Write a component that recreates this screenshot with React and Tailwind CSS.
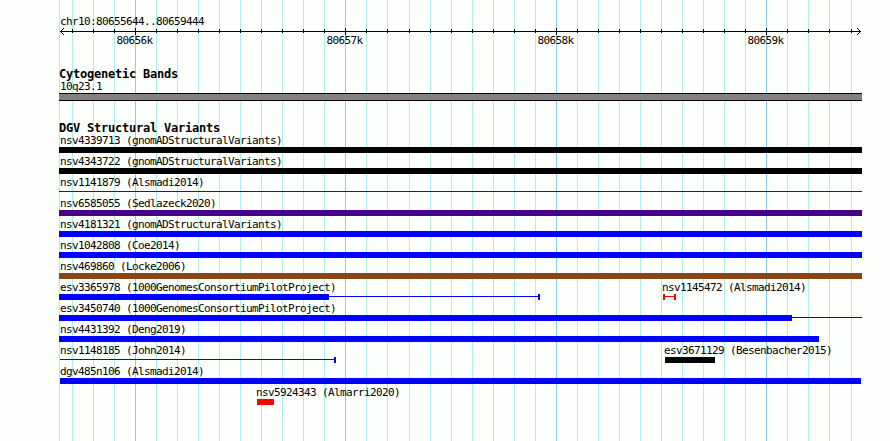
import React from 'react';

const START = 59;
const END = 862;

const minorLines = [
  59, 72, 93, 114, 156, 177, 198, 219, 240, 261, 282, 303, 324, 366, 387, 409, 430, 451, 472,
  493, 514, 535, 577, 598, 619, 640, 661, 682, 703, 724, 745, 787, 808, 829, 851,
];

const majorLines = [
  { x: 135, label: '80656k' },
  { x: 345, label: '80657k' },
  { x: 556, label: '80658k' },
  { x: 766, label: '80659k' },
];

const rows = [
  [{ name: 'nsv4339713 (gnomADStructuralVariants)', x: 59, bar: 803, color: '#000000' }],
  [{ name: 'nsv4343722 (gnomADStructuralVariants)', x: 59, bar: 803, color: '#000000' }],
  [{ name: 'nsv1141879 (Alsmadi2014)', x: 59, line: 803, color: '#4b0082' }],
  [{ name: 'nsv6585055 (Sedlazeck2020)', x: 59, bar: 803, color: '#4b0082' }],
  [{ name: 'nsv4181321 (gnomADStructuralVariants)', x: 59, bar: 803, color: '#0000ff' }],
  [{ name: 'nsv1042808 (Coe2014)', x: 59, bar: 803, color: '#0000ff' }],
  [{ name: 'nsv469860 (Locke2006)', x: 59, bar: 803, color: '#8b4513' }],
  [
    { name: 'esv3365978 (1000GenomesConsortiumPilotProject)', x: 59, bar: 270, line: 211, endCap: true, color: '#0000ff' },
    { name: 'nsv1145472 (Alsmadi2014)', x: 663, line: 13, startCap: true, endCap: true, color: '#ff0000' },
  ],
  [{ name: 'esv3450740 (1000GenomesConsortiumPilotProject)', x: 59, bar: 733, line: 70, color: '#0000ff' }],
  [{ name: 'nsv4431392 (Deng2019)', x: 59, bar: 760, color: '#0000ff' }],
  [
    { name: 'nsv1148185 (John2014)', x: 60, line: 276, endCap: true, color: '#0000ff' },
    { name: 'esv3671129 (Besenbacher2015)', x: 665, bar: 50, color: '#000000' },
  ],
  [{ name: 'dgv485n106 (Alsmadi2014)', x: 60, bar: 801, color: '#0000ff' }],
  [{ name: 'nsv5924343 (Almarri2020)', x: 257, bar: 17, color: '#ff0000' }],
];

function GridLines() {
  return (
    <svg className="absolute inset-0" width="890" height="441" shapeRendering="crispEdges">
      {minorLines.map(x => (
        <rect key={x} x={x} y="0" width="1" height="441" fill="#afeeee" />
      ))}
      {majorLines.map(({ x }) => (
        <rect key={x} x={x} y="0" width="1" height="441" fill="#87ceeb" />
      ))}
    </svg>
  );
}

function Ruler() {
  return (
    <svg className="-mt-px block" width="890" height="8" shapeRendering="crispEdges">
      <rect x="60" y="4" width="801" height="1" />
      {minorLines.filter(x => x > START).map(x => (
        <rect key={x} x={x} y="2" width="1" height="4" />
      ))}
      {majorLines.map(({ x }) => (
        <rect key={x} x={x} y="1" width="1" height="7" />
      ))}
      <path d="M61 3h1v1h-1z M62 2h1v1h-1z M63 1h1v1h-1z M61 5h1v1h-1z M62 6h1v1h-1z M63 7h1v1h-1z" />
      <path d="M859 3h1v1h-1z M858 2h1v1h-1z M857 1h1v1h-1z M859 5h1v1h-1z M858 6h1v1h-1z M857 7h1v1h-1z" />
    </svg>
  );
}

function Label({ children }) {
  return (
    <div className="h-[13px] text-[11px] leading-[13px] tracking-[-0.622px] whitespace-pre">
      {children}
    </div>
  );
}

function Heading({ children }) {
  return (
    <h2 className="h-3 pl-[59px] text-[12px] leading-[13px] font-bold tracking-[-0.224px] whitespace-pre">
      {children}
    </h2>
  );
}

function Feature({ feature, offset }) {
  const { name, x, bar, line, startCap, endCap, color } = feature;
  const width = (bar || 0) + (line || 0);
  const labelStart = Math.max(60, x - 1);

  return (
    <div className="shrink-0" style={{ width, marginLeft: offset }}>
      <div style={{ marginLeft: labelStart - x }}>
        <Label>{name}</Label>
      </div>
      <div className="flex h-1.5">
        {bar && <div className="h-1.5" style={{ width: bar, backgroundColor: color }} />}
        {startCap && <div className="h-1.5 w-0.5" style={{ backgroundColor: color }} />}
        {line && <div className="mt-0.5 h-px flex-1" style={{ backgroundColor: color }} />}
        {endCap && <div className="h-1.5 w-0.5" style={{ backgroundColor: color }} />}
      </div>
    </div>
  );
}

function Row({ features }) {
  return (
    <div className="flex h-[21px]">
      {features.map((feature, i) => {
        const prev = features[i - 1];
        const prevEnd = prev ? prev.x + (prev.bar || 0) + (prev.line || 0) : 0;
        return <Feature key={feature.name} feature={feature} offset={feature.x - prevEnd} />;
      })}
    </div>
  );
}

export default function App() {
  return (
    <div className="relative h-[441px] w-[890px] overflow-hidden bg-[#fdfffc] font-['DejaVu_Sans_Mono',monospace] text-black">
      <GridLines />
      <div className="relative pt-[15px]">
        <div className="pl-[60px]">
          <Label>chr10:80655644..80659444</Label>
        </div>
        <Ruler />
        <div className="-mt-px flex h-[13px] pl-[30px]">
          {majorLines.map(({ x, label }, i) => (
            <div
              key={label}
              className="shrink-0 text-center"
              style={{ width: 209, marginLeft: i === 0 ? x - 135 : x - majorLines[i - 1].x - 209 }}
            >
              <Label>{label}</Label>
            </div>
          ))}
        </div>

        <div className="pt-[21px]">
          <Heading>Cytogenetic Bands</Heading>
          <div className="pl-[60px]">
            <Label>10q23.1</Label>
          </div>
          <div
            className="ml-[59px] h-2 border-y border-black bg-[#858083]"
            style={{ width: END - START }}
          />
        </div>

        <div className="pt-[21px]">
          <Heading>DGV Structural Variants</Heading>
          {rows.map(features => (
            <Row key={features[0].name} features={features} />
          ))}
        </div>
      </div>
    </div>
  );
}
